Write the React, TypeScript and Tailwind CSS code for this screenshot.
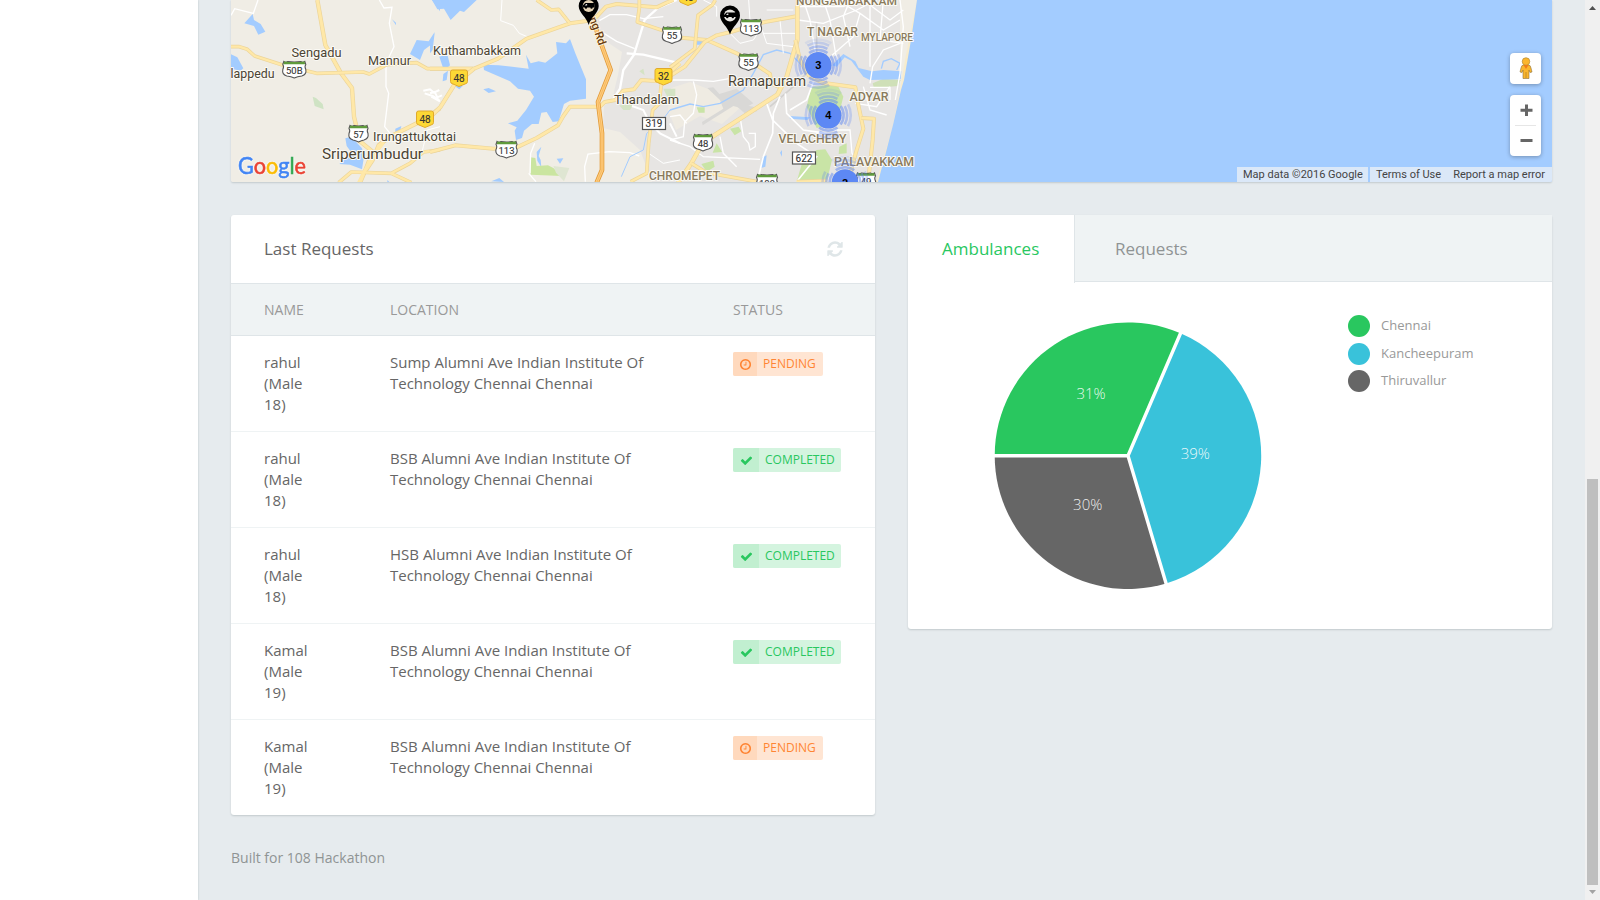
type Status = "pending" | "completed";

const requests: { name: string; age: string; code: string; status: Status }[] = [
  { name: "rahul", age: "18)", code: "Sump", status: "pending" },
  { name: "rahul", age: "18)", code: "BSB", status: "completed" },
  { name: "rahul", age: "18)", code: "HSB", status: "completed" },
  { name: "Kamal", age: "19)", code: "BSB", status: "completed" },
  { name: "Kamal", age: "19)", code: "BSB", status: "pending" },
];

const legend = [
  { label: "Chennai", fill: "#29c75f" },
  { label: "Kancheepuram", fill: "#39c2da" },
  { label: "Thiruvallur", fill: "#666666" },
];

const icons = {
  check:
    "M1671 566q0 40-28 68l-724 724-136 136q-28 28-68 28t-68-28l-136-136-362-362q-28-28-28-68t28-68l136-136q28-28 68-28t68 28l294 295 656-657q28-28 68-28t68 28l136 136q28 28 28 68z",
  clock:
    "M1024 544v448q0 14-9 23t-23 9h-320q-14 0-23-9t-9-23v-64q0-14 9-23t23-9h224v-352q0-14 9-23t23-9h64q14 0 23 9t9 23zm416 352q0-148-73-273t-198-198-273-73-273 73-198 198-73 273 73 273 198 198 273 73 273-73 198-198 73-273zm224 0q0 209-103 385.500t-279.500 279.500-385.500 103-385.500-103-279.500-279.500-103-385.500 103-385.500 279.500-279.500 385.500-103 385.500 103 279.500 279.500 103 385.500z",
  refresh:
    "M1639 1056q0 5-1 7-64 268-268 434.500t-478 166.500q-146 0-282.500-55t-243.500-157l-129 129q-19 19-45 19t-45-19-19-45v-448q0-26 19-45t45-19h448q26 0 45 19t19 45-19 45l-137 137q71 66 161 102t187 36q134 0 250-65t186-179q11-17 53-117 8-23 30-23h192q13 0 22.500 9.500t9.500 22.500zm25-800v448q0 26-19 45t-45 19h-448q-26 0-45-19t-19-45 19-45l138-138q-148-137-349-137-134 0-250 65t-186 179q-11 17-53 117-8 23-30 23h-199q-13 0-22.500-9.500t-9.500-22.500v-7q65-268 270-434.500t480-166.500q146 0 284 55.500t245 156.500l130-129q19-19 45-19t45 19 19 45z",
};

function Icon({ name, className }: { name: keyof typeof icons; className: string }) {
  return (
    <svg className={className} viewBox="0 0 1792 1792" fill="currentColor">
      <path d={icons[name]} />
    </svg>
  );
}

/* Roads are drawn twice: a darker casing below a lighter core. */
function Road({ d, w = 9 }: { d: string; w?: number }) {
  return (
    <g fill="none" strokeLinejoin="round">
      <path d={d} stroke="#ecd59a" strokeWidth={w + 4} />
      <path d={d} stroke="#ffe8a8" strokeWidth={w} />
    </g>
  );
}

function Highway({ d }: { d: string }) {
  return (
    <g fill="none" strokeLinejoin="round">
      <path d={d} stroke="#e29b3a" strokeWidth={14} />
      <path d={d} stroke="#ffcc7c" strokeWidth={9} />
      <path d={d} stroke="#eda84a" strokeWidth={1.5} />
    </g>
  );
}

function Shield({ x, y, t, w = 21 }: { x: number; y: number; t: string; w?: number }) {
  const h = w / 2;
  return (
    <g transform={`translate(${x} ${y})`}>
      <path
        d={`M${-h + 1} -8 Q${-h + 3} -6.5 ${-h + 5} -8 Q0 -7 ${h - 5} -8 Q${h - 3} -6.5 ${h - 1} -8 L${h} -5 Q${h - 1.5} -3 ${h} 0 Q${h + 1} 5 ${h - 4} 6.5 Q3 7 0 8.5 Q-3 7 ${-h + 4} 6.5 Q${-h - 1} 5 ${-h} 0 Q${-h + 1.5} -3 ${-h} -5 Z`}
        fill="#fff"
        stroke="#555"
        strokeWidth="1.1"
      />
      <path d={`M${-h + 1.4} -8 Q0 -7 ${h - 1.4} -8 L${h - 0.6} -5.2 H${-h + 0.6} Z`} fill="#5f9a3c" />
      <text y="4" textAnchor="middle" fontSize="9.500" fill="#333" stroke="#333" strokeWidth=".1">
        {t}
      </text>
    </g>
  );
}

function YellowShield({ x, y, t }: { x: number; y: number; t: string }) {
  return (
    <g transform={`translate(${x} ${y})`}>
      <path
        d="M-6.500 -7.500 H6.500 Q8.500 -7.500 8.500 -5.500 V4 Q8.500 6 6 6.500 L0 9 L-6 6.500 Q-8.500 6 -8.500 4 V-5.500 Q-8.500 -7.500 -6.500 -7.500Z"
        fill="#fdd835"
        stroke="#e0a92c"
      />
      <text y="4" textAnchor="middle" fontSize="10" fill="#333" stroke="#333" strokeWidth=".1">
        {t}
      </text>
    </g>
  );
}

function BoxRoad({ x, y, t }: { x: number; y: number; t: string }) {
  return (
    <g transform={`translate(${x} ${y})`}>
      <rect x="-11.500" y="-6" width="23" height="12" fill="#fff" stroke="#555" strokeWidth="1.2" />
      <text y="3.700" textAnchor="middle" fontSize="10" fill="#333" stroke="#333" strokeWidth=".1">
        {t}
      </text>
    </g>
  );
}

function Place({ x, y, t, w, s = 13, c = "#4b4434", b = 400 }: { x: number; y: number; t: string; w: number; s?: number; c?: string; b?: number }) {
  return (
    <text
      x={x}
      y={y}
      fontSize={s}
      fontWeight={b}
      textLength={w}
      lengthAdjust="spacingAndGlyphs"
      fill={c}
      stroke="#fbfaf5"
      strokeWidth="2"
      strokeLinejoin="round"
      paintOrder="stroke"
    >
      {t}
    </text>
  );
}

function Cluster({ x, y, n }: { x: number; y: number; n: string }) {
  return (
    <g transform={`translate(${x} ${y})`}>
      <g fill="none" stroke="#5c86f2" strokeWidth="2.600">
        <circle r="15.300" opacity=".5" pathLength="360" strokeDasharray="74 16" strokeDashoffset="37" />
        <circle r="18.800" opacity=".42" pathLength="360" strokeDasharray="58 32" strokeDashoffset="29" />
        <circle r="22.500" opacity=".28" pathLength="360" strokeDasharray="58 32" strokeDashoffset="29" />
        <path d="M-13 -22 A26 26 0 0 1 13 -22" opacity=".12" />
      </g>
      <circle r="13.300" fill="#5d88f4" />
      <text y="4" textAnchor="middle" fontFamily="Liberation Sans, sans-serif" fontSize="11" fontWeight="700" fill="#000">
        {n}
      </text>
    </g>
  );
}

function Pin({ x, y, warm }: { x: number; y: number; warm?: boolean }) {
  return (
    <g transform={`translate(${x} ${y})`}>
      <path d="M0 19 C-2 11 -10 7 -10 0 A10 10 0 0 1 10 0 C10 7 2 11 0 19Z" fill="#000" />
      <circle r="6" fill={warm ? "#e5d3b5" : "#e8e6e2"} />
      <path d="M-6 1.500 V-0.500 L-3.500 -3 H6 V1.500 H4 A1.200 1.200 0 0 1 1.600 1.500 H-1.500 A1.200 1.200 0 0 1 -4 1.500Z" fill="#000" />
      <path d="M-4 -.6 L-2.600 -2 H-1.600 V-.6Z" fill="#ddd" />
    </g>
  );
}

const brown = "#8a7a5c";

function CityMap() {
  return (
    <svg className="block h-[182px] w-full" viewBox="231 0 1321 182" fontFamily="Roboto, sans-serif" preserveAspectRatio="none">
      <rect x="231" width="1321" height="182" fill="#f0ede5" />
      <path d="M585 0 L592 20 L604 40 L622 52 L618 75 L612 100 L604 106 L603 128 L620 132 L640 150 L652 182 H900 V0Z" fill="#e7e5e3" />
      <path d="M671 88 L690 82 L716 92 L740 108 L722 124 L700 116 L676 130 L668 110Z" fill="#efebe2" />
      <path d="M917 0 L905 60 L900 90 L892 130 L876 182 H884 L906 90 L918 30Z" fill="#f7ecce" />
      <path d="M917 0 L911 40 L904 80 L901 90 L893 125 L886 152 L878 182 H1552 V0Z" fill="#a3ccff" />

      {/* western section */}
      <g transform="translate(190 0) scale(.33333)">
        <g fill="#a3ccff">
          <path d="M163 70 L188 42 L192 60 L212 72 L226 95 L205 104 L192 78Z" />
          <path d="M123 163 L142 172 L160 205 L152 212 L123 206Z" />
          <path d="M726 0 H750 V34Z" />
          <path d="M660 162 L680 120 L716 124 L734 96 L726 132 L702 150 L690 180Z" />
          <path d="M466 415 L484 410 L516 445 L522 470 L516 508 L480 494 L448 492 L486 460 L470 438Z" />
          <path d="M616 386 L634 378 L630 396 L616 400Z M606 58 L618 68 V76Z M592 540 L598 546 H592Z" />
        </g>
        <path d="M368 290 L378 294 L398 312 L401 328 L374 318Z" fill="#cfe3c4" />
        <g fill="none" stroke="#fff" strokeWidth="4">
          <path d="M123 46 L134 26 L190 40 L204 0" />
          <path d="M568 0 L582 24 L606 22 L598 70 L612 140 L588 190 L588 260 L596 280 L584 380 L600 400" />
          <path d="M700 272 L720 268 L732 278 L748 270 M704 280 L728 288 L748 300" strokeWidth="6" />
          <path d="M750 380 L712 390 L700 440 L690 480" strokeWidth="3" />
        </g>
        <Road d="M382 0 L406 135 L452 218 L486 264 L492 350 L510 424 L548 455 L524 516 L510 548" />
        <Road d="M123 140 H148 L172 148 L194 168 L280 196 L380 220 L520 216 L538 222 L590 194 L680 188 L712 206 H850" w={7} />
        <Road d="M750 325 L700 360 L600 410 L566 436 L548 480 L524 516" />
        <Road d="M750 450 L700 456 L660 490 L604 520 L484 516 L446 548 M604 520 L664 548" w={7} />
        <path d="M506 548 L524 512 L548 470 L580 428" stroke="#ffe8a8" strokeWidth="10" fill="none" />
      </g>

      {/* central section */}
      <g transform="translate(430 0) scale(.33333)">
        <g fill="#a3ccff">
          <path d="M6 0 L22 28 L42 26 L62 60 L90 32 L102 36 L140 0Z" />
          <path d="M0 130 L14 98 L8 150 L0 160Z M28 170 L52 162 L60 196 L42 212Z M40 222 L54 212 L50 240 L38 244Z" />
          <path d="M160 194 L206 196 L296 206 L288 164 L302 190 L326 184 L346 188 L382 160 L378 126 L408 130 L420 117 L436 160 L468 238 V296 L420 302 L402 312 L386 364 L368 366 L350 336 L334 338 L326 372 L306 372 L282 392 L276 414 L258 420 L254 392 L260 382 L234 370 L262 362 L288 330 L312 290 L300 272 L264 266 L240 244 L162 210Z" />
          <path d="M160 268 L176 264 L198 274 L176 279Z M380 476 L400 475 L390 491Z M334 440 L320 456 L322 482 L334 502 L332 480 L326 468Z M184 544 L208 534 L222 546Z M74 258 H98 L88 268Z" />
        </g>
        <path d="M300 472 L316 474 L320 498 L354 496 L370 504 L396 528 L302 524Z" fill="#cae5a0" />
        <path d="M370 498 L418 504 L402 544 L378 518Z" fill="#dfe6d2" />
        <path d="M568 316 L610 314 L600 330 L580 330Z M628 214 L640 206 L644 226Z M700 266 H736 V290 H712Z" fill="#d4e3c4" />
        <g fill="none" stroke="#fff" strokeWidth="4">
          <path d="M216 0 L212 62 L250 76 L268 100 L296 112" strokeWidth="3" />
          <path d="M300 520 L302 460 L314 430 M466 545 L464 500 L474 462 L538 455 L600 458 L628 468 M296 520 L318 545" />
          <path d="M508 62 L540 44 L590 44 L640 56 L700 50 M512 94 L560 124 L614 146" />
          <path d="M740 0 L684 24 L644 60 L612 164 L580 210 L570 266 L548 300 M590 160 L640 164 L750 190" strokeWidth="7" />
          <path d="M606 318 L640 330 L660 370 L690 400 L750 430 M720 370 L740 410" strokeWidth="6" />
          <path d="M0 280 L14 276 L22 292 L36 286 M4 290 L30 304" strokeWidth="6" />
          <path d="M656 460 L700 490 L750 480" strokeWidth="3" />
        </g>
        <path d="M574 530 L600 470 L640 450 L650 400 L690 370 L720 330" stroke="#a3ccff" strokeWidth="3" fill="none" />
        <Road d="M0 206 H132 L204 176 L290 116 L420 70 L476 62 L500 50 L528 20 L560 12 L680 22 L710 8 L730 0" w={8} />
        <Road d="M320 0 L364 30 L386 28 L418 68" w={7} />
        <Road d="M628 0 V24 L622 66 L700 92 L750 104" w={7} />
        <Road d="M0 352 L32 320 L72 256 L132 206" />
        <Road d="M0 456 L76 436 L190 446 L260 442 L320 414 L384 376 L400 348 L420 320 L510 320 L524 306 L556 300 L580 272 L612 268 L634 240 L690 244 L750 190" w={8} />
        <Road d="M694 250 L688 310 L668 330 L656 430 L650 520 L602 545" w={7} />
        <Highway d="M484 40 L500 92 L520 150 L542 210 L504 306 L516 400 V510 L500 548" />
      </g>

      {/* eastern section */}
      <g transform="translate(670 0) scale(.33333)">
        <g fill="#d9d8d6">
          <path d="M112 264 L130 262 L148 282 L200 266 L250 310 L220 326 L190 318 L98 376 L96 366 L160 326 L150 300Z" />
          <path d="M190 310 L250 320 L262 334 L224 340Z" />
        </g>
        <g fill="#c9e4a6">
          <path d="M424 262 L500 250 L520 290 L500 370 L440 384 L410 320Z" />
          <path d="M380 545 L396 490 L440 450 L466 448 L486 480 L470 545Z" />
          <path d="M180 386 L206 380 L214 394 L194 406Z M80 322 L104 322 V338 H86Z M94 492 L130 482 L134 500 L110 515Z M508 440 L530 430 L530 460 L506 462Z M140 430 L156 456 L128 458Z" />
        </g>
        <path d="M608 250 L640 236 L692 240 L684 258 L612 264Z" fill="#cfe0b8" />
        <path d="M486 196 L520 162 L556 184 L566 204 L606 214 L640 210 L694 214 L692 238 L600 240 L580 230 L544 182 L524 172 L500 200Z" fill="#a3ccff" />
        <g fill="#a3ccff">
          <path d="M72 120 H100 V134 H72Z M276 472 L290 466 L286 500 L274 504Z M358 348 L420 352 L412 360 L360 356Z M330 458 L336 450 V470Z" />
        </g>
        <path d="M0 330 L60 312 L100 320 L150 310 L220 270 L250 220 L280 164 L320 150 L360 160 L400 200 M634 206 L640 184 L664 176 L690 190 L680 210" stroke="#a3ccff" strokeWidth="4" fill="none" />
        <g fill="none" stroke="#d3d1cf" strokeWidth="5">
          <path d="M440 70 V180 L410 220 L370 260 L300 320" />
        </g>
        <g fill="none" stroke="#fff" strokeWidth="4">
          <path d="M0 240 H70 L130 244 L178 236 M70 244 L80 284 L70 340 L44 366 L40 410 L0 420 M0 350 L30 345 L50 370" />
          <path d="M386 20 H520 L560 0 M400 0 L420 60 L440 180 M384 60 L460 70 L560 30 L620 0 M460 0 L480 60 L500 180 M500 0 L570 40 L640 90 L690 60 M570 40 L550 110 L486 166 M540 0 L520 50 L540 140 M600 0 V200 M640 0 L630 120 L700 130" />
          <path d="M690 0 L700 80 L690 220 L676 300 M600 250 L608 200 L640 150 L690 130 M580 0 L660 60 L700 30" />
          <path d="M430 246 L410 300 L360 330 M330 290 L310 340 L308 400 L280 470 L262 545 M290 310 L308 360 L380 430 L440 470 L380 545 M346 280 L350 340 L400 390 L470 400" strokeWidth="5" />
          <path d="M210 350 L220 410 L236 430 L240 450 L256 440 L256 400 L236 400 M150 410 L160 460 L200 500 M0 420 L60 440 L100 470 L270 478" />
          <path d="M490 390 L540 390 L546 460 L560 480 M580 260 L600 330 L650 345 M556 310 L620 320 L660 260 M600 262 H660 V300" />
          <path d="M100 0 L140 20 V50 M236 0 L240 60 M270 70 L290 130 L370 140 M180 100 L210 130 L250 120 L270 90 M330 60 L340 160 M280 100 H376 M290 30 H370" strokeWidth="3" />
        </g>
        <Road d="M0 110 L110 120 L200 160 L240 182 L300 222 L304 250 L330 262" w={8} />
        <Road d="M0 202 L74 146 L84 46 L128 14 L136 0" w={7} />
        <Road d="M0 228 L44 200 L104 126 L140 106 L182 96 L284 66 L384 48" w={8} />
        <Road d="M382 0 V120 L350 230 L322 284 L220 350 L130 408 L92 440 L64 490 L24 548" w={10} />
        <Road d="M376 120 L390 180 L416 226 L456 248 L556 262 L564 310 L580 386 L560 450 L546 500 L536 548" w={8} />
        <Road d="M574 354 L612 356 L608 420 L594 548" w={8} />
        <Road d="M64 490 L110 518 L260 545 M380 545 L470 542" w={7} />
      </g>

      <g transform="translate(591 18) rotate(70)">
        <text x="0" y="2" fontSize="11.500" fontWeight="500" textLength="29" fill="#6b3d10" stroke="#fff3d8" strokeWidth="2" paintOrder="stroke">
          ng Rd
        </text>
      </g>

      <Place x={291.5} y={56.500} t="Sengadu" w={50} />
      <Place x={368} y={65} t="Mannur" w={43} />
      <Place x={230.500} y={77.500} t="lappedu" w={44} />
      <Place x={373} y={141} t="Irungattukottai" w={83} />
      <Place x={322} y={158.500} t="Sriperumbudur" w={101} s={15.5} />
      <Place x={433} y={54.5} t="Kuthambakkam" w={88} />
      <Place x={614} y={103.500} t="Thandalam" w={65} />
      <Place x={728} y={86} t="Ramapuram" w={78} s={14.5} />
      <Place x={796} y={4.500} t="NUNGAMBAKKAM" w={101} s={11.5} c={brown} b={500} />
      <Place x={807} y={36} t="T NAGAR" w={51} c={brown} b={500} />
      <Place x={861} y={41} t="MYLAPORE" w={52} s={10.5} c={brown} b={500} />
      <Place x={849.500} y={101} t="ADYAR" w={39} c={brown} b={500} />
      <Place x={778.500} y={142.500} t="VELACHERY" w={68} c={brown} b={500} />
      <Place x={834} y={166} t="PALAVAKKAM" w={80} c={brown} b={500} />
      <Place x={649} y={180} t="CHROMEPET" w={71} c={brown} b={500} />

      <Shield x={294.300} y={69.500} t="50B" w={23} />
      <Shield x={358.500} y={133.500} t="57" w={19} />
      <Shield x={506.500} y={149.500} t="113" />
      <Shield x={672} y={35} t="55" w={19} />
      <Shield x={748.500} y={62} t="55" w={19} />
      <Shield x={751} y={27.500} t="113" />
      <Shield x={703} y={142.500} t="48" w={19} />
      <Shield x={767} y={182.500} t="189" />
      <Shield x={866} y={181} t="49" w={19} />
      <YellowShield x={459} y={77.500} t="48" />
      <YellowShield x={425} y={118.500} t="48" />
      <YellowShield x={663.500} y={76} t="32" />
      <YellowShield x={688} y={-3.500} t="48" />
      <BoxRoad x={654} y={123.500} t="319" />
      <BoxRoad x={804} y={158} t="622" />

      <Cluster x={818.300} y={65.300} n="3" />
      <Cluster x={828.300} y={115.300} n="4" />
      <Cluster x={845} y={182.500} n="2" />
      <Pin x={588.700} y={6} warm />
      <Pin x={730} y={15.500} />

      <text
        className="drop-shadow-[0_0_1px_#fff]"
        x="238"
        y="173.500"
        fontFamily="Lato, sans-serif"
        fontSize="23.500"
        textLength="68"
        lengthAdjust="spacingAndGlyphs"
        strokeWidth=".6"
      >
        <tspan fill="#4285f4" stroke="#4285f4">G</tspan>
        <tspan fill="#ea4335" stroke="#ea4335">o</tspan>
        <tspan fill="#fbbc05" stroke="#fbbc05">o</tspan>
        <tspan fill="#4285f4" stroke="#4285f4">g</tspan>
        <tspan fill="#34a853" stroke="#34a853">l</tspan>
        <tspan fill="#ea4335" stroke="#ea4335">e</tspan>
      </text>
    </svg>
  );
}

function MapControls() {
  return (
    <div className="absolute right-[11px] top-[53px] flex flex-col gap-[11px]">
      <div className="flex h-[31px] w-[31px] items-center justify-center rounded-sm bg-white shadow-[0_1px_4px_rgba(0,0,0,0.3)]">
        <svg className="mb-[2px] h-[22px] w-[14px]" viewBox="0 0 14 22">
          <path d="M4.500 8 H9.500 Q11.500 8 12 11 L13 15 L11 15.500 L10 13 V21.500 H4 V13 L3 15.500 L1 15 L2 11 Q2.500 8 4.500 8Z" fill="#fbb62d" stroke="#8d7440" strokeWidth=".6" />
          <circle cx="7" cy="4.500" r="3.800" fill="#fbb62d" stroke="#a88331" strokeWidth=".6" />
          <path d="M4.500 8 H9.500 L7 12Z" fill="#ef7d1a" />
          <path d="M7 15 V21" stroke="#b5832a" strokeWidth=".8" />
        </svg>
      </div>
      <div className="flex h-[61px] w-[31px] flex-col items-center rounded-sm bg-white shadow-[0_1px_4px_rgba(0,0,0,0.3)]">
        <svg className="h-[30px] w-[31px]" viewBox="0 0 31 30">
          <path d="M10.500 15.300 H22.500 M16.500 9.500 V21" stroke="#666" strokeWidth="3" />
        </svg>
        <div className="h-px w-[21px] bg-[#e6e6e6]" />
        <svg className="h-[30px] w-[31px]" viewBox="0 0 31 30">
          <path d="M10.500 14.500 H22.500" stroke="#666" strokeWidth="3" />
        </svg>
      </div>
    </div>
  );
}

function Badge({ status }: { status: Status }) {
  if (status === "pending") {
    return (
      <span className="flex h-6 w-[90px] overflow-hidden rounded-xs bg-[#ffe5d3] text-[12px] leading-6 text-[#ff8534]">
        <span className="flex w-6 items-center justify-center bg-[#ffd9bd]">
          <Icon name="clock" className="size-[13px]" />
        </span>
        <span className="pl-1.5">PENDING</span>
      </span>
    );
  }
  return (
    <span className="flex h-6 w-[108px] overflow-hidden rounded-xs bg-[#d4f4df] text-[12px] leading-6 text-[#29c75f]">
      <span className="flex w-[26px] items-center justify-center bg-[#c1efd0]">
        <Icon name="check" className="size-[13px]" />
      </span>
      <span className="pl-1.5">COMPLETED</span>
    </span>
  );
}

function Pie() {
  return (
    <svg className="h-[270px] w-[270px]" viewBox="993 320 270 270">
      <path d="M1128 455.700 L994.700 455.700 A133.300 133.300 0 0 1 1180.500 333.200Z" fill="#29c75f" />
      <path d="M1128 455.700 L1180.500 333.200 A133.300 133.300 0 0 1 1166.100 583.400Z" fill="#39c2da" />
      <path d="M1128 455.700 L1166.100 583.400 A133.300 133.300 0 0 1 994.700 455.700Z" fill="#666" />
      <path d="M993 455.700 H1128 L1181.500 331 M1128 455.700 L1166.700 585.500" stroke="#fff" strokeWidth="3.400" fill="none" />
      <g className="font-light" fontSize="15" fill="#fff" fillOpacity=".9" textAnchor="middle">
        <text x="1091" y="399">31%</text>
        <text x="1195.300" y="459">39%</text>
        <text x="1087.700" y="510">30%</text>
      </g>
    </svg>
  );
}

export default function App() {
  return (
    <div className="flex h-[900px] w-[1600px] overflow-hidden bg-[#e6ebee] font-['Open_Sans',sans-serif] text-[#666]">
      <aside className="w-[198px] shrink-0 bg-white shadow-[0_0_2px_rgba(0,40,40,0.2)]" />

      <main className="flex min-w-0 flex-1 flex-col pl-[33px] pr-[33px]">
        <section className="relative h-[182px] overflow-hidden rounded-b-xs shadow-[0_1px_2px_rgba(0,30,30,0.16)]">
          <CityMap />
          <MapControls />
          <div className="absolute bottom-0 right-0 flex h-[15px] gap-[2px] font-[Roboto,sans-serif] text-[11px] leading-[15px] whitespace-nowrap text-[#444]">
            <div className="w-[131px] bg-[#dbe8f8] pl-[6px]">Map data ©2016 Google</div>
            <div className="flex w-[182px] justify-between bg-[#dbe8f8] pl-[6px] pr-[7px]">
              <span>Terms of Use</span>
              <span>Report a map error</span>
            </div>
          </div>
        </section>

        <div className="mt-[33px] flex items-start gap-[33px]">
          <section className="h-[600px] w-[644px] rounded-[3px] bg-white shadow-[0_1px_2px_rgba(0,30,30,0.16)]">
            <header className="flex h-[68px] items-center justify-between pl-[33px] pr-[31px]">
              <h2 className="text-[17px] leading-6">Last Requests</h2>
              <Icon name="refresh" className="size-[18px] text-[#dfe6e8]" />
            </header>
            <div className="grid h-[53px] grid-cols-[126px_343px_1fr] items-center border-y border-[#dfe5e8] bg-[#eff3f4] pl-[33px] text-[14px] text-[#999]">
              <span>NAME</span>
              <span>LOCATION</span>
              <span>STATUS</span>
            </div>
            {requests.map((r, i) => (
              <div
                key={i}
                className="grid h-24 grid-cols-[126px_343px_1fr] items-start border-b border-[#eff3f4] pl-[33px] pt-4 text-[15px] leading-[21px] last:h-[95px] last:border-b-0"
              >
                <div>
                  {r.name}
                  <br />
                  (Male
                  <br />
                  {r.age}
                </div>
                <div>
                  {r.code} Alumni Ave Indian Institute Of
                  <br />
                  Technology Chennai Chennai
                </div>
                <Badge status={r.status} />
              </div>
            ))}
          </section>

          <section className="h-[414px] w-[644px] rounded-[3px] bg-white shadow-[0_1px_2px_rgba(0,30,30,0.16)]">
            <nav className="flex h-[67px] text-[17px] leading-[67px]">
              <div className="h-[68px] w-[167px] border-r border-[#dfe5e8] bg-white pl-[34px] text-[#29c75f]">Ambulances</div>
              <div className="flex-1 border-b border-[#dfe5e8] bg-[#eff3f4] pl-10 text-[#8f9494]">Requests</div>
            </nav>
            <div className="flex pl-[85px] pt-[38px]">
              <Pie />
              <ul className="ml-[85px] mt-[-5px] flex flex-col gap-[5.500px] text-[13px] leading-[20px] text-[#999]">
                {legend.map((l) => (
                  <li key={l.label} className="flex h-[22px] items-start gap-[11px]">
                    <span className="size-[22px] rounded-full" style={{ background: l.fill }} />
                    <span>{l.label}</span>
                  </li>
                ))}
              </ul>
            </div>
          </section>
        </div>

        <footer className="mt-[33px] text-[14px] leading-5 text-[#8f9494]">Built for 108 Hackathon</footer>
      </main>

      <div className="flex w-[15px] shrink-0 flex-col items-center bg-[#f0f0f0]">
        <svg className="h-[15px] w-[15px]" viewBox="0 0 15 15">
          <path d="M4 10 L7.500 6 L11 10Z" fill="#505050" />
        </svg>
        <div className="mt-[464px] h-[406px] w-[11px] bg-[#bfbfbf]" />
        <svg className="h-[15px] w-[15px]" viewBox="0 0 15 15">
          <path d="M4 5 L7.500 9 L11 5Z" fill="#a3a3a3" />
        </svg>
      </div>
    </div>
  );
}
